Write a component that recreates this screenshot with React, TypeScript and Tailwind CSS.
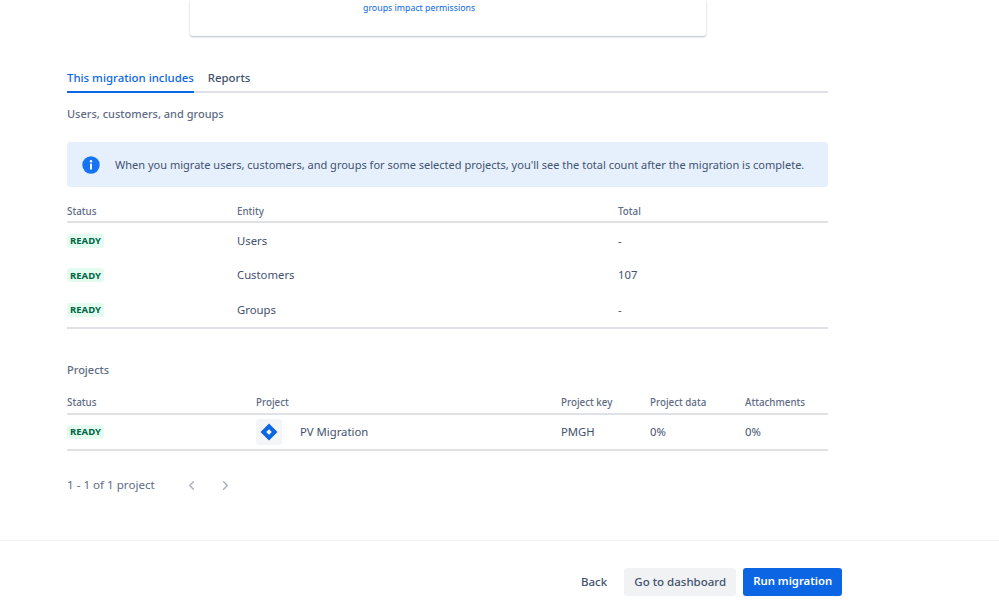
import React from "react";
import { ChevronLeft, ChevronRight } from "lucide-react";

const Ready = () => (
  <span className="inline-flex h-[14px] w-[37px] items-center justify-center rounded-[3px] bg-[#e3fcef] text-[9.5px] font-bold leading-none text-[#006644]">READY</span>
);

function JiraIcon() {
  return (
    <svg width="18" height="18" viewBox="0 0 18 18" aria-hidden="true" className="shrink-0">
      <path fillRule="evenodd" clipRule="evenodd" d="M9 0.5 L17.5 9 L9 17.5 L0.5 9 Z M9 6.2 L6.2 9 L9 11.8 L11.8 9 Z" fill="#0c66e4" />
    </svg>
  );
}

function EntityRow({ name, total }: { name: string; total: string }) {
  return (
    <div className="grid h-[34.5px] grid-cols-[170px_381px_1fr] items-center">
      <div className="flex items-center pt-[1px]"><Ready /></div>
      <div className="pt-[2px]">{name}</div>
      <div className="pt-[2px]">{total}</div>
    </div>
  );
}

export default function App() {
  return (
    <div className="flex h-[604px] w-[999px] flex-col overflow-hidden bg-white font-['Noto_Sans','Open_Sans',sans-serif] text-[11.3px] text-[#42526e]">
      <div className="ml-[190px] flex h-[36px] w-[516px] shrink-0 justify-start rounded-b-[3px] bg-white pl-[173px] shadow-[0_1px_2px_rgba(9,30,66,0.3)]">
        <span className="mt-[1px] text-[8.8px] leading-[14px] text-[#0c66e4]">groups impact permissions</span>
      </div>

      <div className="ml-[67px] mt-[33px] w-[761px]">
        <div className="flex h-[24px] border-b-2 border-[#dfe1e6] text-[11.4px] font-medium leading-[18px]">
          <div className="-mb-[2px] h-[24px] border-b-2 border-[#0c66e4] text-[#0c66e4]">This migration includes</div>
          <div className="ml-[14px] text-[#42526e]">Reports</div>
        </div>

        <div className="mt-[12px] h-[17px] text-[11px] font-medium leading-[17px] text-[#5e6c84]">Users, customers, and groups</div>

        <div className="mt-[20px] flex h-[45px] items-center rounded-[3px] bg-[#e6f0fd] pl-[15px]">
          <svg width="18" height="18" viewBox="0 0 18 18" aria-hidden="true" className="shrink-0">
            <circle cx="9" cy="9" r="8.7" fill="#1673f5" />
            <circle cx="9" cy="5.2" r="1.2" fill="#fff" />
            <rect x="8" y="7.6" width="2" height="6" rx="0.6" fill="#fff" />
          </svg>
          <span className="ml-[15px] whitespace-nowrap pt-[1px] text-[11.02px]">When you migrate users, customers, and groups for some selected projects, you'll see the total count after the migration is complete.</span>
        </div>

        <div className="mt-[16px] grid h-[20px] grid-cols-[170px_381px_1fr] items-center border-b-2 border-[#dfe1e6] text-[9.8px] font-medium text-[#5e6c84]">
          <div>Status</div>
          <div>Entity</div>
          <div>Total</div>
        </div>
        <div className="border-b-2 border-[#dfe1e6]">
          <EntityRow name="Users" total="-" />
          <EntityRow name="Customers" total="107" />
          <EntityRow name="Groups" total="-" />
        </div>

        <div className="mt-[32px] h-[17px] text-[11px] font-medium leading-[17px] text-[#5e6c84]">Projects</div>

        <div className="mt-[17px] grid h-[20px] grid-cols-[189px_305px_89px_95px_1fr] items-center border-b-2 border-[#dfe1e6] text-[9.8px] font-medium text-[#5e6c84]">
          <div>Status</div>
          <div>Project</div>
          <div>Project key</div>
          <div>Project data</div>
          <div>Attachments</div>
        </div>
        <div className="grid h-[36px] grid-cols-[189px_305px_89px_95px_1fr] items-center border-b-2 border-[#dfe1e6]">
          <div className="flex items-center pt-[1px]"><Ready /></div>
          <div className="flex items-center">
            <div className="flex h-[26px] w-[26px] items-center justify-center rounded-[3px] bg-[#f4f5f7]"><JiraIcon /></div>
            <span className="ml-[18px] pt-[1px]">PV Migration</span>
          </div>
          <div className="pt-[1px]">PMGH</div>
          <div className="pt-[1px]">0%</div>
          <div className="pt-[1px]">0%</div>
        </div>

        <div className="mt-[26px] flex h-[17px] items-center text-[#5e6c84]">
          <span className="w-[117px] text-[11.6px]">1 - 1 of 1 project</span>
          <ChevronLeft size={15} className="text-[#a5adba]" />
          <ChevronRight size={15} className="ml-[19px] text-[#a5adba]" />
        </div>
      </div>

      <div className="mt-[46px] h-px w-full shrink-0 bg-[#f1f2f4]" />

      <div className="mt-[27px] ml-[581px] flex h-[28px] items-center text-[11.5px] font-medium">
        <span className="text-[#42526e]">Back</span>
        <button className="ml-[17px] h-[28px] w-[112px] rounded-[3px] bg-[#f1f2f4] text-[#42526e]">Go to dashboard</button>
        <button className="ml-[7px] h-[28px] w-[99px] rounded-[3px] bg-[#0c66e4] text-[11.3px] font-semibold text-white">Run migration</button>
      </div>
    </div>
  );
}
